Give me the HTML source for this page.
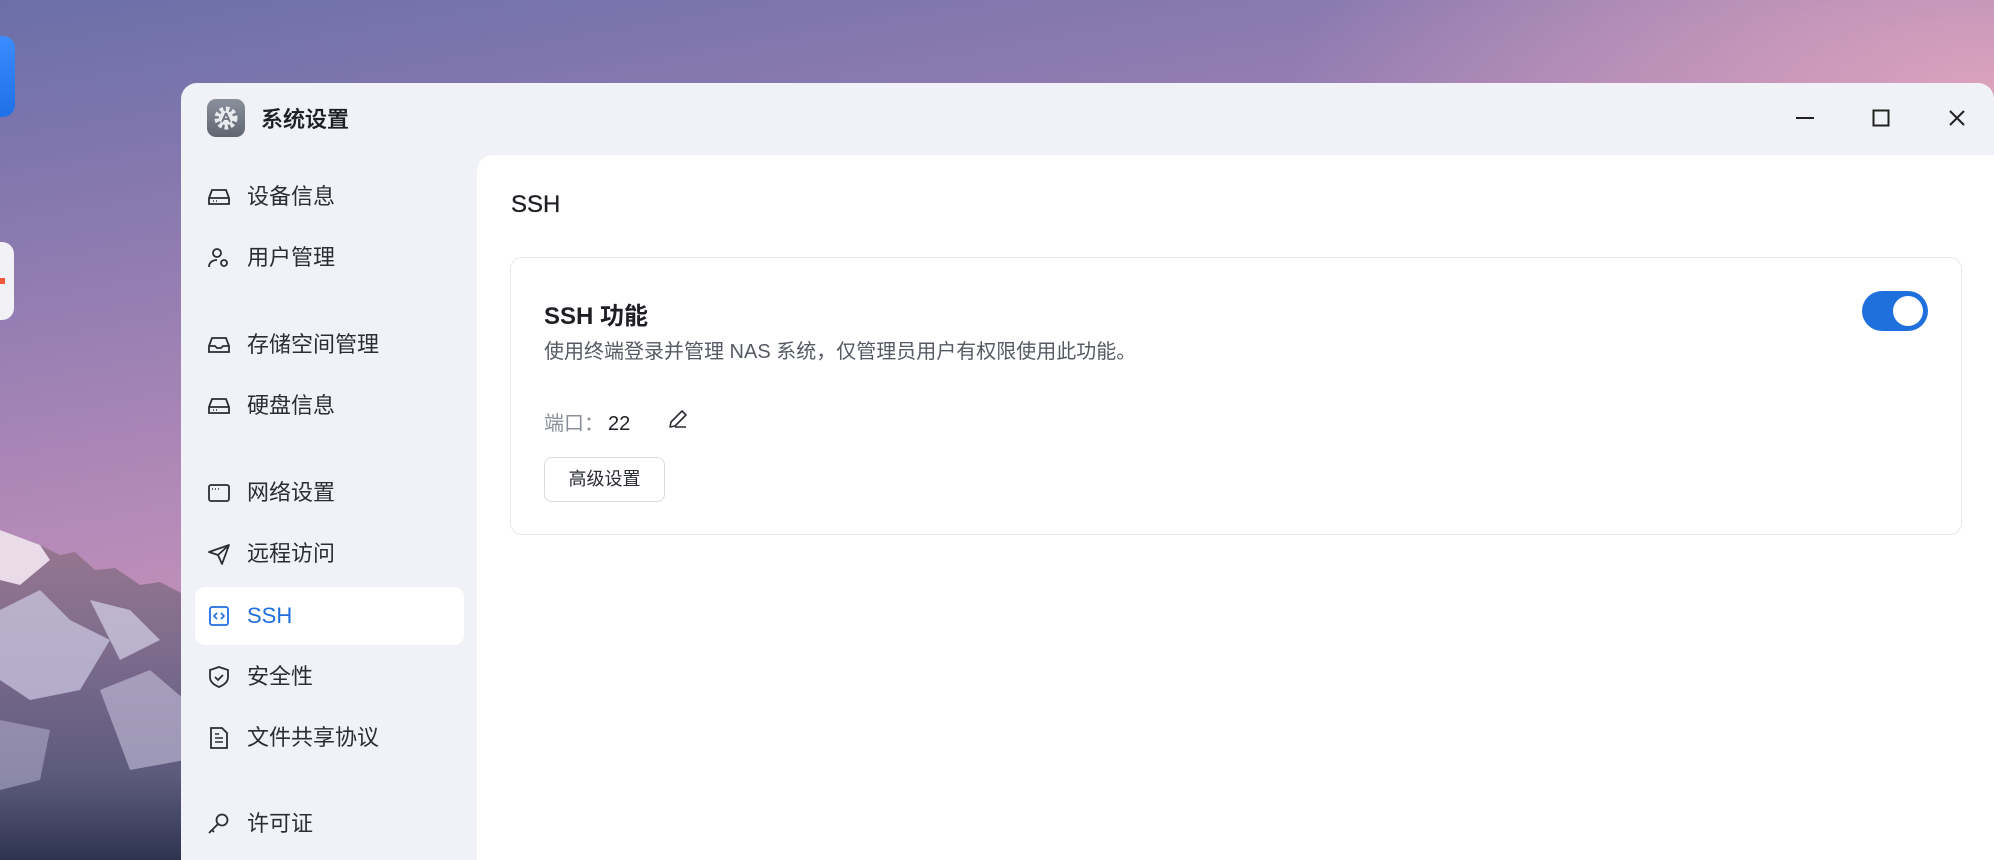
<!DOCTYPE html>
<html><head><meta charset="utf-8">
<style>
*{margin:0;padding:0;box-sizing:border-box}
html,body{width:1994px;height:860px;overflow:hidden}
body{position:relative;font-family:"Liberation Sans","Noto Sans CJK SC",sans-serif;
background:radial-gradient(ellipse 700px 300px at 1994px 90px,#dba2bd 0%,rgba(219,162,189,0) 100%),linear-gradient(170deg,#6b6fa8 0%,#8a7ab0 20%,#b58ab8 45%,#d49cba 70%,#e0a8c0 100%);}
.win{position:absolute;left:181px;top:83px;width:1813px;height:777px;background:#f0f2f7;border-radius:16px 16px 0 0;overflow:hidden}
.title{position:absolute;left:80px;top:22px;font-size:22px;color:#1d1f24;line-height:30px;font-weight:500;-webkit-text-stroke:0.3px #1d1f24}
.appic{position:absolute;left:26px;top:16px;width:38px;height:38px;border-radius:9px;background:linear-gradient(#8a909c,#5f6571)}
.ctrl{position:absolute;top:23px;width:24px;height:24px}
.item{position:absolute;left:14px;width:269px;height:58px;border-radius:10px;font-size:22px;color:#2a2d33;line-height:58px;padding-left:52px}
.item svg{position:absolute;left:12px;top:18px}
.item.act{background:#fff;color:#1f6fdc}
.panel{position:absolute;left:296px;top:72px;width:1517px;height:705px;background:#fff;border-radius:16px 0 0 0}
.h{position:absolute;left:34px;top:36px;font-size:24px;color:#1d1f24;-webkit-text-stroke:0.3px #1d1f24}
.card{position:absolute;left:33px;top:102px;width:1452px;height:278px;border:1px solid #e6e8ec;border-radius:12px}
.ct{position:absolute;left:33px;top:38px;font-size:24px;color:#1d1f24;font-weight:bold}
.cd{position:absolute;left:33px;top:77px;font-size:20px;color:#555a63}
.port{position:absolute;left:33px;top:149px;font-size:20px;color:#8a8f99}
.port b{font-weight:normal;color:#1d1f24;margin-left:4px}
.btn{position:absolute;left:33px;top:199px;width:121px;height:45px;border:1px solid #d8dbe0;border-radius:8px;font-size:18px;color:#2a2d33;text-align:center;line-height:43px}
.tog{position:absolute;left:1351px;top:33px;width:66px;height:40px;border-radius:20px;background:#1f6fdc}
.tog i{position:absolute;right:5px;top:5px;width:30px;height:30px;border-radius:50%;background:#fff}
</style></head><body>
<svg style="position:absolute;left:0;top:0" width="200" height="860">
<defs><linearGradient id="m" x1="0" y1="0" x2="0" y2="1"><stop offset="0" stop-color="#9a7890"/><stop offset=".4" stop-color="#7a6a8c"/><stop offset=".75" stop-color="#5c5a7c"/><stop offset="1" stop-color="#2e3450"/></linearGradient></defs>
<polygon points="0,530 40,545 60,555 75,552 95,570 115,568 140,585 160,582 185,595 185,860 0,860" fill="url(#m)"/>
<polygon points="0,530 40,545 50,560 20,585 0,580" fill="#eadbe8"/>
<polygon points="0,610 40,590 70,620 110,640 80,690 30,700 0,680" fill="#c9c6e0" opacity=".75"/>
<polygon points="90,600 130,610 160,640 120,660" fill="#d6d2e8" opacity=".7"/>
<polygon points="100,690 150,670 185,700 185,760 130,770" fill="#c6c2dc" opacity=".6"/>
<polygon points="0,720 50,730 40,780 0,790" fill="#bdb8d6" opacity=".5"/>
</svg>
<div style="position:absolute;left:-20px;top:36px;width:35px;height:81px;border-radius:12px;background:linear-gradient(#3a8cff,#1f6fe8)"></div>
<div style="position:absolute;left:-20px;top:242px;width:34px;height:78px;border-radius:12px;background:#f2f2f6"><i style="position:absolute;left:20px;top:36px;width:5px;height:6px;background:#f05a3a"></i></div>
<div class="win">
 <div class="appic"><svg width="38" height="38" viewBox="0 0 38 38"><circle cx="19" cy="19" r="9" fill="none" stroke="#e8eaee" stroke-width="5" stroke-dasharray="3.5 2.5"/><circle cx="19" cy="19" r="7" fill="#e8eaee"/><path d="M19 14 L15 23 M19 14 L23 23 M16 20 H22" stroke="#6a707c" stroke-width="1.8" fill="none"/></svg></div>
 <div class="title">系统设置</div>
 <svg class="ctrl" style="left:1612px" viewBox="0 0 24 24"><path d="M3 12H21" stroke="#222" stroke-width="2"/></svg>
 <svg class="ctrl" style="left:1688px" viewBox="0 0 24 24"><rect x="4.5" y="4.5" width="15" height="15" fill="none" stroke="#222" stroke-width="2"/></svg>
 <svg class="ctrl" style="left:1764px" viewBox="0 0 24 24"><path d="M5 5L19 19M19 5L5 19" stroke="#222" stroke-width="2"/></svg>
 <div class="item" style="top:85px"><svg width="24" height="22" viewBox="0 0 24 22"><path d="M2 12 L5 4 H19 L22 12 V18 H2 Z M2 12 H22" fill="none" stroke="#2a2d33" stroke-width="1.8"/><path d="M6 15h1M9 15h1" stroke="#2a2d33" stroke-width="1.6"/></svg>设备信息</div>
 <div class="item" style="top:146px"><svg width="24" height="22" viewBox="0 0 24 22"><circle cx="10" cy="6" r="4" fill="none" stroke="#2a2d33" stroke-width="1.8"/><path d="M2 20c0-5 4-7 8-7" fill="none" stroke="#2a2d33" stroke-width="1.8"/><circle cx="17" cy="16" r="3" fill="none" stroke="#2a2d33" stroke-width="1.8"/></svg>用户管理</div>
 <div class="item" style="top:233px"><svg width="24" height="22" viewBox="0 0 24 22"><path d="M2 12 L5 4 H19 L22 12 V18 H2 Z M2 12 H8 L10 14 H14 L16 12 H22" fill="none" stroke="#2a2d33" stroke-width="1.8"/></svg>存储空间管理</div>
 <div class="item" style="top:294px"><svg width="24" height="22" viewBox="0 0 24 22"><path d="M2 12 L5 4 H19 L22 12 V18 H2 Z M2 12 H22" fill="none" stroke="#2a2d33" stroke-width="1.8"/><path d="M6 15h1M9 15h1" stroke="#2a2d33" stroke-width="1.6"/></svg>硬盘信息</div>
 <div class="item" style="top:381px"><svg width="24" height="22" viewBox="0 0 24 22"><rect x="2" y="3" width="20" height="16" rx="2" fill="none" stroke="#2a2d33" stroke-width="1.8"/><path d="M5 7h1M8 7h1M11 7h1" stroke="#2a2d33" stroke-width="1.6"/></svg>网络设置</div>
 <div class="item" style="top:442px"><svg width="24" height="22" viewBox="0 0 24 22"><path d="M2 9 L22 2 L15 21 L11 12 Z M11 12 L22 2" fill="none" stroke="#2a2d33" stroke-width="1.8" stroke-linejoin="round"/></svg>远程访问</div>
 <div class="item act" style="top:504px"><svg width="24" height="22" viewBox="0 0 24 22"><rect x="3" y="2" width="18" height="18" rx="2" fill="none" stroke="#1f6fdc" stroke-width="1.8"/><path d="M10 8l-3 3 3 3M14 8l3 3-3 3" fill="none" stroke="#1f6fdc" stroke-width="1.6"/></svg>SSH</div>
 <div class="item" style="top:565px"><svg width="24" height="22" viewBox="0 0 24 22"><path d="M12 1 L21 4 V11 C21 16 17 19 12 21 C7 19 3 16 3 11 V4 Z" fill="none" stroke="#2a2d33" stroke-width="1.8"/><path d="M8 11l3 3 5-5" fill="none" stroke="#2a2d33" stroke-width="1.8"/></svg>安全性</div>
 <div class="item" style="top:626px"><svg width="24" height="22" viewBox="0 0 24 22"><path d="M4 1H15L20 6V21H4Z" fill="none" stroke="#2a2d33" stroke-width="1.8"/><path d="M8 11h8M8 15h8M8 7h4" stroke="#2a2d33" stroke-width="1.6"/></svg>文件共享协议</div>
 <div class="item" style="top:712px"><svg width="24" height="22" viewBox="0 0 24 22"><circle cx="15" cy="7" r="5.5" fill="none" stroke="#2a2d33" stroke-width="1.8"/><path d="M11 11 L2 20 M5 17l2 2" fill="none" stroke="#2a2d33" stroke-width="1.8"/></svg>许可证</div>
 <div class="panel">
  <div class="h">SSH</div>
  <div class="card">
   <div class="ct">SSH 功能</div>
   <div class="cd">使用终端登录并管理 NAS 系统，仅管理员用户有权限使用此功能。</div>
   <div class="port">端口：<b>22</b><svg style="position:absolute;left:122px;top:0" width="24" height="24" viewBox="0 0 24 24"><path d="M4 20 L5 15 L16 4 L20 8 L9 19 Z M9 20 H20" fill="none" stroke="#2a2d33" stroke-width="1.6" stroke-linejoin="round"/></svg></div>
   <div class="btn">高级设置</div>
   <div class="tog"><i></i></div>
  </div>
 </div>
</div>
</body></html>
